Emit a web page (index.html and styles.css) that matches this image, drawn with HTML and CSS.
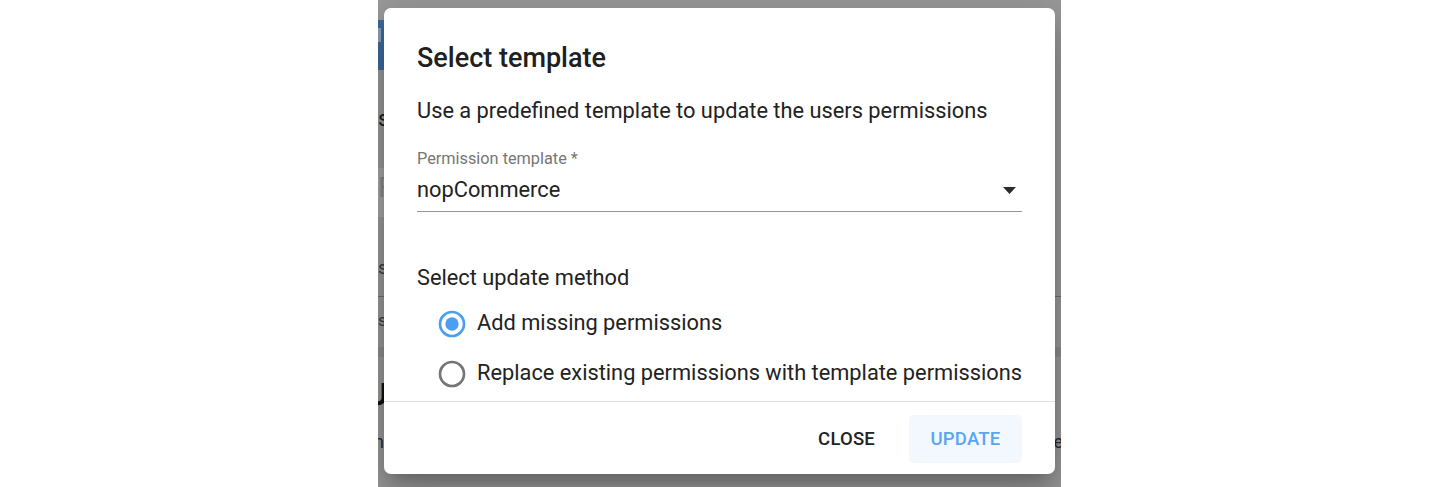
FILE: index.html
```html
<!DOCTYPE html>
<html lang="en">
<head>
<meta charset="utf-8">
<title>Select template</title>
<link rel="stylesheet" href="styles.css">
</head>
<body>
<div class="frame">
  <div class="page">
    <div class="hdr"><div class="hdr-search"></div></div>
    <div class="bg-row s1"><span class="bg-left">s</span></div>
    <div class="bg-box"><span class="bg-left box-f">F</span></div>
    <div class="bg-row s2"><span class="bg-left">s</span></div>
    <div class="bg-line"></div>
    <div class="bg-row s3"><span class="bg-left">s</span></div>
    <div class="bg-bar"></div>
    <div class="bg-row u"><span class="bg-left u-text">U</span></div>
    <div class="bg-row ne"><span class="bg-left n-text">n</span><span class="bg-right">e</span></div>
  </div>

  <div class="dialog" role="dialog">
    <h2 class="dialog-title">Select template</h2>
    <div class="dialog-content">
      <p class="subtitle">Use a predefined template to update the users permissions</p>
      <div class="field">
        <div class="field-label">Permission template *</div>
        <div class="field-input">
          <span class="field-value">nopCommerce</span>
          <svg class="arrow" width="13" height="7" viewBox="0 0 13 7"><path d="M0 0 L13 0 L6.5 7 Z" fill="#2b2b2b"/></svg>
        </div>
      </div>
      <div class="method-label">Select update method</div>
      <div class="radio-group">
        <label class="radio-row">
          <svg class="radio" width="32" height="32" viewBox="0 0 24 24"><circle cx="12" cy="12" r="9" fill="none" stroke="#4b9ef0" stroke-width="2"/><circle cx="12" cy="12" r="5" fill="#4b9ef0"/></svg>
          <span class="radio-text">Add missing permissions</span>
        </label>
        <label class="radio-row">
          <svg class="radio" width="32" height="32" viewBox="0 0 24 24"><circle cx="12" cy="12" r="9" fill="none" stroke="#757575" stroke-width="2"/></svg>
          <span class="radio-text">Replace existing permissions with template permissions</span>
        </label>
      </div>
    </div>
    <div class="dialog-actions">
      <button class="btn btn-close">Close</button>
      <button class="btn btn-update">Update</button>
    </div>
  </div>
</div>
</body>
</html>
```

FILE: styles.css
```css
* { box-sizing: border-box; }
html, body {
  margin: 0;
  padding: 0;
  background: #ffffff;
  font-family: Roboto, "Liberation Sans", Arial, sans-serif;
}
.frame {
  position: relative;
  width: 683px;
  height: 487px;
  margin-left: 378px;
  background: #9a9a9a;
  overflow: hidden;
}
.page {
  display: flex;
  flex-direction: column;
}
.hdr {
  margin-top: 20px;
  height: 50px;
  width: 120px;
  background: #3c6c9e;
  padding-top: 8px;
}
.hdr-search {
  width: 3px;
  height: 14px;
  background: #8fa2b6;
}
.bg-row {
  display: flex;
  justify-content: space-between;
  color: #1c1c1c;
  white-space: nowrap;
}
.bg-left { display: block; }
.s1 { margin-top: 37px; height: 24px; line-height: 24px; font-size: 22px; }
.bg-box {
  margin-top: 37px;
  height: 49px;
  width: 120px;
  background: #a7a7a7;
  font-size: 28px;
  line-height: 40px;
  color: #8a8a8a;
}
.s2 { margin-top: 41px; height: 20px; line-height: 20px; font-size: 19px; color: #3a3a3a; }
.bg-line { margin-top: 18px; height: 1px; background: #6e6e6e; }
.s3 { margin-top: 13px; height: 20px; line-height: 20px; font-size: 17px; color: #3a3a3a; }
.bg-bar { margin-top: 17px; height: 10px; background: #8d8d8d; }
.u { margin-top: 21px; height: 32px; line-height: 32px; font-size: 32px; font-weight: 700; color: #111; }
.u-text { margin-left: -11px; }
.ne { margin-top: 22px; height: 20px; line-height: 20px; font-size: 18px; color: #2a2a2a; }
.n-text { margin-left: -4px; }
.bg-right { margin-right: -2px; }

.dialog {
  position: absolute;
  left: 6px;
  top: 8px;
  width: 671px;
  height: 466px;
  background: #ffffff;
  border-radius: 7px;
  display: flex;
  flex-direction: column;
  box-shadow: 0 11px 15px -7px rgba(0,0,0,0.2), 0 24px 38px 3px rgba(0,0,0,0.14), 0 9px 46px 8px rgba(0,0,0,0.12);
}
.dialog-title {
  margin: 0;
  padding: 34px 33px 0 33px;
  font-size: 27px;
  line-height: 33px;
  font-weight: 500;
  color: #202020;
}
.dialog-content {
  flex: 1;
  overflow: hidden;
  padding: 0 33px;
  border-bottom: 1px solid #e0e0e0;
}
.subtitle {
  margin: 22px 0 0 0;
  font-size: 21.8px;
  line-height: 28px;
  color: #222222;
}
.field { margin-top: 25px; }
.field-label {
  font-size: 16.3px;
  line-height: 18px;
  color: #767676;
}
.field-input {
  margin-top: 8px;
  display: flex;
  align-items: center;
  justify-content: space-between;
  padding-bottom: 7px;
  border-bottom: 1px solid #949494;
}
.field-value {
  font-size: 21.8px;
  line-height: 28px;
  color: #222222;
}
.arrow { margin-right: 6px; display: block; }
.method-label {
  margin-top: 52px;
  font-size: 21.8px;
  line-height: 28px;
  color: #222222;
}
.radio-group {
  margin-top: 7px;
  display: flex;
  flex-direction: column;
}
.radio-row {
  display: flex;
  align-items: center;
  height: 50px;
  padding-left: 19px;
  gap: 9px;
}
.radio { display: block; flex: none; }
.radio-text {
  font-size: 21.8px;
  line-height: 28px;
  color: #222222;
  margin-bottom: 3px;
  white-space: nowrap;
}
.dialog-actions {
  display: flex;
  justify-content: flex-end;
  gap: 12px;
  padding: 13px 33px 11px 33px;
}
.btn {
  height: 48px;
  padding: 0 21px;
  border: none;
  border-radius: 5px;
  background: transparent;
  font-family: Roboto, "Liberation Sans", Arial, sans-serif;
  font-size: 18.5px;
  font-weight: 500;
  letter-spacing: 0.2px;
  text-transform: uppercase;
  cursor: pointer;
}
.btn-close { color: #222222; padding: 0 22px 0 20px; }
.btn-update { background: #f3f8fe; color: #58a6f2; width: 113px; padding: 0; }
```
